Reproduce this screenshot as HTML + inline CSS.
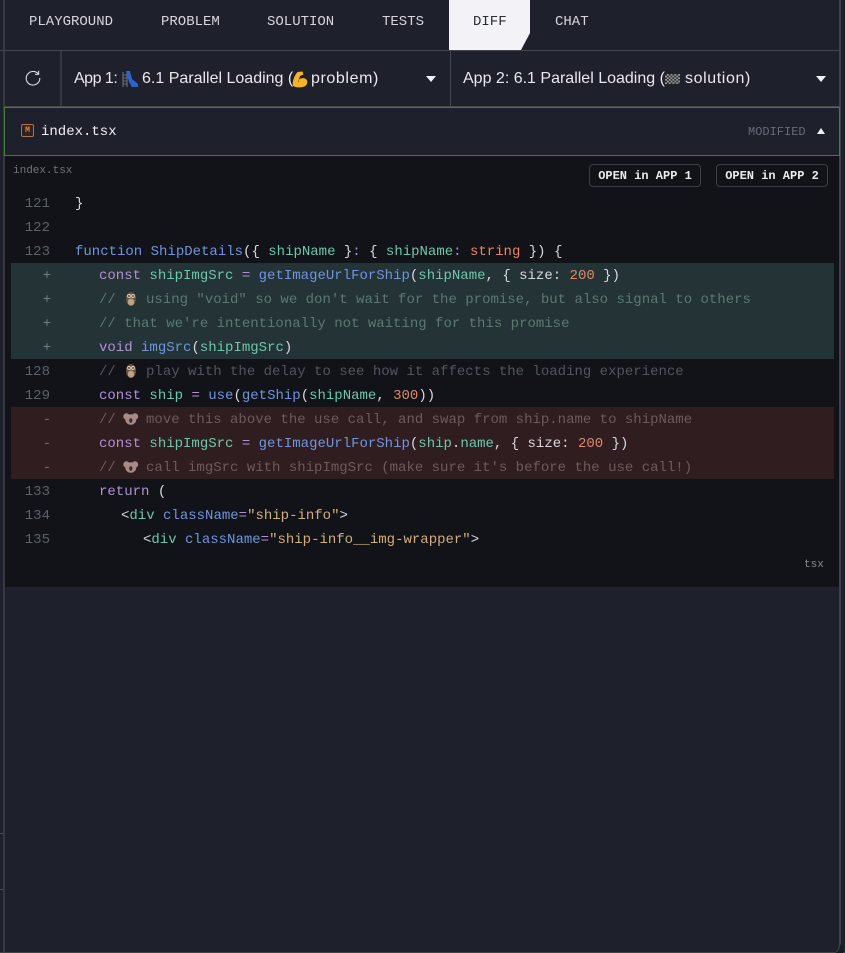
<!DOCTYPE html>
<html lang="en">
<head>
<meta charset="utf-8">
<title>Diff</title>
<style>
html,body{margin:0;padding:0;background:#1e212b;}
body{position:relative;width:845px;height:953px;overflow:hidden;font-family:"Liberation Mono",monospace;color:#e6e6ec;}
.a{position:absolute;}
.tab{position:absolute;top:14px;font-size:14px;line-height:16px;color:#d6d7dc;white-space:nowrap;}
.sel{position:absolute;top:69px;font-family:"Liberation Sans",sans-serif;font-size:16px;line-height:20px;color:#e8e8ee;white-space:nowrap;}
.code{position:absolute;left:5px;top:156px;width:834px;height:431px;background:#121318;}
.row{position:absolute;left:11px;width:823px;height:24px;}
.ln{position:absolute;left:0;width:50px;height:24px;line-height:26px;font-size:14px;text-align:right;color:#596268;}
.sg{position:absolute;left:40px;width:14px;height:24px;line-height:26px;font-size:14px;text-align:center;color:#6a7f7a;}
.t{position:absolute;height:24px;line-height:26px;font-size:14px;white-space:pre;color:#e0e1e6;}
.k{color:#b48fd6}.f{color:#6f94e0}.v{color:#6dc7ab}.n{color:#e5875f}.s{color:#d2ae7e}.p{color:#d9dae0}
svg.e{display:inline-block;width:13.4px;height:15px;vertical-align:-3px;overflow:visible;}
.btn{position:absolute;top:164px;height:20px;padding-top:1px;line-height:21px;border:1px solid #3b3e48;border-radius:4px;background:#121318;color:#eaeaef;font-size:12px;font-weight:bold;text-align:center;}
</style>
</head>
<body>
<div class="a" style="left:3px;top:0;width:2px;height:953px;background:#363944"></div>
<div class="a" style="left:0;top:833px;width:3px;height:1px;background:#4a4d57"></div>
<div class="a" style="left:0;top:889px;width:3px;height:1px;background:#4a4d57"></div>
<div class="a" style="left:839px;top:0;width:2px;height:953px;background:#3f424b"></div>
<div class="a" style="left:0;top:952px;width:845px;height:1px;background:#3f424b"></div>
<svg class="a" style="left:831px;top:943px" width="14" height="10" viewBox="0 0 14 10">
<path d="M0 10H3C6 10 8 7 9 3L10 0 11 4 12 10z" fill="#10201f"/>
<path d="M0 9.5H3C6 9.5 8 7 8.5 2" fill="none" stroke="#3f424b"/>
</svg>

<div class="tab" style="left:29px">PLAYGROUND</div>
<div class="tab" style="left:161px">PROBLEM</div>
<div class="tab" style="left:267px">SOLUTION</div>
<div class="tab" style="left:382px">TESTS</div>
<div class="a" style="left:449px;top:0;width:81px;height:50px;background:#f2f2f7;clip-path:polygon(0 0,100% 0,100% 33px,72px 100%,0 100%)"></div>
<div class="tab" style="left:473px;color:#2a2d36">DIFF</div>
<div class="tab" style="left:555px">CHAT</div>

<div class="a" style="left:0;top:50px;width:840px;height:1px;background:#44474f"></div>
<div class="a" style="left:60px;top:51px;width:2px;height:55px;background:#34373f"></div>
<div class="a" style="left:450px;top:51px;width:1px;height:55px;background:#44474f"></div>
<svg class="a" style="left:25px;top:70px" width="16" height="16" viewBox="0 0 16 16" fill="none" stroke="#dcdde2" stroke-width="1.1">
<path d="M13.2 3.9A6.8 6.8 0 1 0 14.8 8"/>
<path d="M13.6 0.8V4.3H10.1"/>
</svg>
<div class="sel" style="left:74px;letter-spacing:-.5px">App 1:</div>
<svg class="a" style="left:122px;top:71px" width="16" height="16" viewBox="0 0 16 16">
<path d="M1 16V1M5 16V1M1 4h4M1 7h4M1 10h4M1 13h4" stroke="#6a6e76" stroke-width="1.1" fill="none"/>
<path d="M4 0h4l2 8 6 5v3H10L7 11z" fill="#2e62cf"/>
</svg>
<div class="sel" style="left:142px">6.1 Parallel Loading (</div>
<svg class="a" style="left:291px;top:71px" width="17" height="17" viewBox="0 0 17 17">
<path d="M2 15C1 10 3.500 4.500 6.500 1L11.500 0.500l1 3-3.500 1.500-1 3.500c2.500-2 6.500-1.800 8 .8 1 2.700-.5 5.200-2.500 6.200-3.500 1.300-8 1.300-11.500-.5z" fill="#f5b428"/>
<path d="M8 8.500c-.6 1-.8 2-.6 3" stroke="#b87a10" fill="none"/>
</svg>
<div class="sel" style="left:311px;letter-spacing:.6px">problem)</div>
<div class="a" style="left:425.500px;top:76px;width:0;height:0;border-left:5px solid transparent;border-right:5px solid transparent;border-top:6px solid #f0f0f4"></div>

<div class="sel" style="left:463px">App 2: 6.1 Parallel Loading (</div>
<svg class="a" style="left:665px;top:74px" width="15" height="10" viewBox="0 0 16 12" preserveAspectRatio="none">
<rect width="16" height="12" x="0" y="0" fill="#cfcfcf" opacity=".7"/>
<path d="M0 0h2v2H0zM4 0h2v2H4zM8 0h2v2H8zM12 0h2v2h-2zM2 2h2v2H2zM6 2h2v2H6zM10 2h2v2h-2zM14 2h2v2h-2zM0 4h2v2H0zM4 4h2v2H4zM8 4h2v2H8zM12 4h2v2h-2zM2 6h2v2H2zM6 6h2v2H6zM10 6h2v2h-2zM14 6h2v2h-2zM0 8h2v2H0zM4 8h2v2H4zM8 8h2v2H8zM12 8h2v2h-2zM2 10h2v2H2zM6 10h2v2H6zM10 10h2v2h-2zM14 10h2v2h-2z" fill="#2a2c33"/>
</svg>
<div class="sel" style="left:685px;letter-spacing:.6px">solution)</div>
<div class="a" style="left:815.500px;top:76px;width:0;height:0;border-left:5px solid transparent;border-right:5px solid transparent;border-top:6px solid #f0f0f4"></div>

<div class="a" style="left:4px;top:106px;width:836px;height:1px;background:#44474f"></div>
<div class="a" style="left:4px;top:107px;width:834px;height:47px;border:1px solid #4a7a3e;background:#1e212b"></div>
<div class="a" style="left:21px;top:124px;width:11px;height:11px;border:1px solid #b5713a;border-radius:2px;background:#2a2525;color:#e08a3c;font-size:8px;line-height:11px;text-align:center;font-weight:bold">M</div>
<div class="a" style="left:41px;top:124px;font-size:14px;line-height:16px;color:#f0f0f4">index.tsx</div>
<div class="a" style="left:748px;top:125px;font-size:12px;line-height:14px;color:#666b7a">MODIFIED</div>
<div class="a" style="left:816.500px;top:128px;width:0;height:0;border-left:4.500px solid transparent;border-right:4.500px solid transparent;border-bottom:6px solid #f0f0f4"></div>

<div class="code"></div>
<div class="a" style="left:13px;top:164px;font-size:11px;line-height:14px;color:#70737c">index.tsx</div>
<div class="btn" style="left:589px;width:110px">OPEN in APP 1</div>
<div class="btn" style="left:716px;width:110px">OPEN in APP 2</div>

<div class="row" style="top:263px;height:96px;background:#243335"></div>
<div class="row" style="top:407px;height:72px;background:#301d20"></div>

<div class="ln" style="top:191px">121</div>
<div class="t" style="left:75px;top:191px"><span class="p">}</span></div>

<div class="ln" style="top:215px">122</div>

<div class="ln" style="top:239px">123</div>
<div class="t" style="left:75px;top:239px"><span class="f">function</span> <span class="f">ShipDetails</span><span class="p">({</span> <span class="v">shipName</span> <span class="p">}</span><span class="k">:</span> <span class="p">{</span> <span class="v">shipName</span><span class="k">:</span> <span class="n">string</span> <span class="p">})</span> <span class="p">{</span></div>

<div class="sg" style="top:263px">+</div>
<div class="t" style="left:99px;top:263px"><span class="k">const</span> <span class="v">shipImgSrc</span> <span class="k">=</span> <span class="f">getImageUrlForShip</span><span class="p">(</span><span class="v">shipName</span><span class="p">, { size:</span> <span class="n">200</span> <span class="p">})</span></div>

<div class="sg" style="top:287px">+</div>
<div class="t" style="left:99px;top:287px;color:#5c7872">// <svg class="e" viewBox="0 0 13.400 15"><ellipse cx="7" cy="8" rx="5" ry="7" fill="#6e5138"/><ellipse cx="7" cy="11" rx="3.200" ry="3.500" fill="#b9a488"/><circle cx="5" cy="5" r="2" fill="#d9cfbb"/><circle cx="9" cy="5" r="2" fill="#d9cfbb"/><circle cx="5" cy="5" r=".9" fill="#222"/><circle cx="9" cy="5" r=".9" fill="#222"/></svg> using "void" so we don't wait for the promise, but also signal to others</div>

<div class="sg" style="top:311px">+</div>
<div class="t" style="left:99px;top:311px;color:#5c7872">// that we're intentionally not waiting for this promise</div>

<div class="sg" style="top:335px">+</div>
<div class="t" style="left:99px;top:335px"><span class="k">void</span> <span class="f">imgSrc</span><span class="p">(</span><span class="v">shipImgSrc</span><span class="p">)</span></div>

<div class="ln" style="top:359px">128</div>
<div class="t" style="left:99px;top:359px;color:#50565e">// <svg class="e" viewBox="0 0 13.400 15"><ellipse cx="7" cy="8" rx="5" ry="7" fill="#6e5138"/><ellipse cx="7" cy="11" rx="3.200" ry="3.500" fill="#b9a488"/><circle cx="5" cy="5" r="2" fill="#d9cfbb"/><circle cx="9" cy="5" r="2" fill="#d9cfbb"/><circle cx="5" cy="5" r=".9" fill="#222"/><circle cx="9" cy="5" r=".9" fill="#222"/></svg> play with the delay to see how it affects the loading experience</div>

<div class="ln" style="top:383px">129</div>
<div class="t" style="left:99px;top:383px"><span class="k">const</span> <span class="v">ship</span> <span class="k">=</span> <span class="f">use</span><span class="p">(</span><span class="f">getShip</span><span class="p">(</span><span class="v">shipName</span><span class="p">,</span> <span class="n">300</span><span class="p">))</span></div>

<div class="sg" style="top:407px;color:#7a6565">-</div>
<div class="t" style="left:99px;top:407px;color:#6b5b5b">// <svg class="e" viewBox="0 0 13.400 15"><circle cx="2.500" cy="5.500" r="3.200" fill="#a88a88"/><circle cx="11" cy="5.500" r="3.200" fill="#a88a88"/><ellipse cx="6.800" cy="8.500" rx="5.500" ry="5.300" fill="#a58a88"/><ellipse cx="6.800" cy="9.500" rx="1.600" ry="2.300" fill="#3a2f2f"/></svg> move this above the use call, and swap from ship.name to shipName</div>

<div class="sg" style="top:431px;color:#7a6565">-</div>
<div class="t" style="left:99px;top:431px"><span class="k">const</span> <span class="v">shipImgSrc</span> <span class="k">=</span> <span class="f">getImageUrlForShip</span><span class="p">(</span><span class="v">ship</span><span class="p">.</span><span class="v">name</span><span class="p">, { size:</span> <span class="n">200</span> <span class="p">})</span></div>

<div class="sg" style="top:455px;color:#7a6565">-</div>
<div class="t" style="left:99px;top:455px;color:#6b5b5b">// <svg class="e" viewBox="0 0 13.400 15"><circle cx="2.500" cy="5.500" r="3.200" fill="#a88a88"/><circle cx="11" cy="5.500" r="3.200" fill="#a88a88"/><ellipse cx="6.800" cy="8.500" rx="5.500" ry="5.300" fill="#a58a88"/><ellipse cx="6.800" cy="9.500" rx="1.600" ry="2.300" fill="#3a2f2f"/></svg> call imgSrc with shipImgSrc (make sure it's before the use call!)</div>

<div class="ln" style="top:479px">133</div>
<div class="t" style="left:99px;top:479px"><span class="k">return</span> <span class="p">(</span></div>

<div class="ln" style="top:503px">134</div>
<div class="t" style="left:121px;top:503px"><span class="p">&lt;</span><span class="v">div</span> <span class="f">className</span><span class="k">=</span><span class="s">"ship-info"</span><span class="p">&gt;</span></div>

<div class="ln" style="top:527px">135</div>
<div class="t" style="left:143px;top:527px"><span class="p">&lt;</span><span class="v">div</span> <span class="f">className</span><span class="k">=</span><span class="s">"ship-info__img-wrapper"</span><span class="p">&gt;</span></div>

<div class="a" style="left:804px;top:558px;font-size:11px;line-height:14px;color:#8a8d95">tsx</div>
</body>
</html>
